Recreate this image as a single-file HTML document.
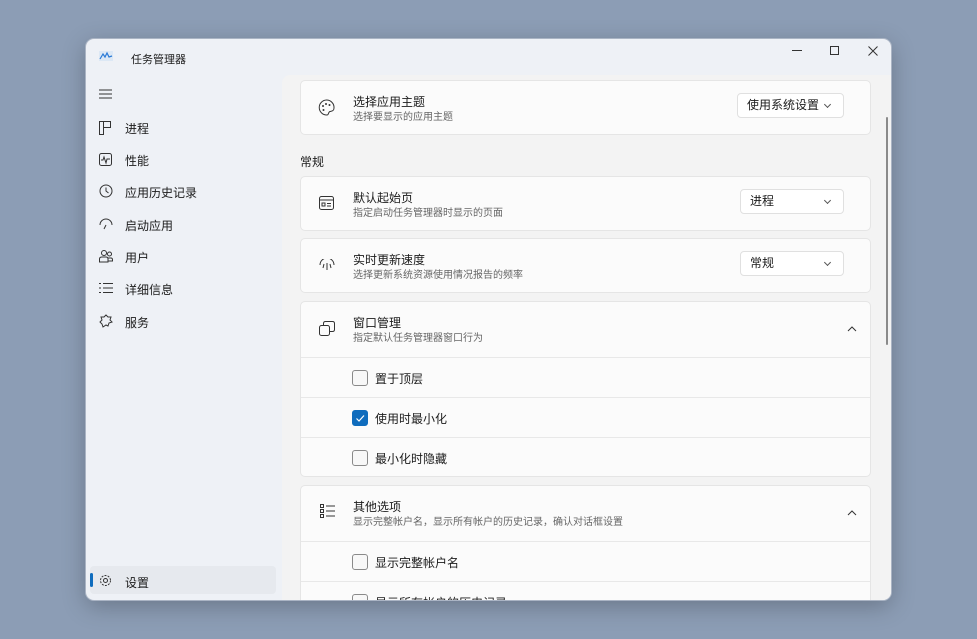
<!DOCTYPE html>
<html><head><meta charset="utf-8"><style>
*{box-sizing:border-box;margin:0;padding:0}
body{width:977px;height:639px;background:#8c9db5;font-family:"Liberation Sans","Noto Sans CJK SC",sans-serif;position:relative;overflow:hidden;color:#1b1b1b}
.win{position:absolute;left:86px;top:39px;width:805px;height:561px;background:#eef1f6;border-radius:8px;overflow:hidden;box-shadow:0 0 0 1px #aab4c4,0 6px 24px rgba(0,0,0,.25)}
.content{position:absolute;left:196px;top:36px;right:0;bottom:0;background:#f3f3f3;border-top-left-radius:8px}
.t{position:absolute;font-size:12px;white-space:nowrap}
.nav{position:absolute;left:13px;font-size:12px}
.nav span{position:absolute;left:26px;top:0;white-space:nowrap}
.card{position:absolute;left:214px;width:571px;background:#fbfbfb;border:1px solid #e5e5e5;border-radius:5px}
.card .h{position:absolute;left:52px;font-size:12px;color:#1b1b1b}
.card .s{position:absolute;left:52px;font-size:10px;color:#666}
.dd{position:absolute;background:#fff;border:1px solid #e0e0e0;border-radius:4px;height:25px;font-size:12px;line-height:23px;padding-left:9px}
.dd:after{content:"";position:absolute;right:13px;top:8px;width:4px;height:4px;border-right:1px solid #555;border-bottom:1px solid #555;transform:rotate(45deg)}
.row{position:absolute;left:0;right:0;border-top:1px solid #e8e8e8;height:40px}
.cb{position:absolute;left:51px;top:12px;width:16px;height:16px;border:1px solid #8a8a8a;border-radius:3px;background:#f8f8f8}
.row span{position:absolute;left:74px;top:12px;font-size:12px}
svg{position:absolute}
</style></head><body>
<div class="win">
<svg style="left:13px;top:12px" width="14" height="10" viewBox="0 0 14 10"><rect x="0" y="0" width="14" height="10" fill="#dce8f5"/><path d="M1 8 L4 3 L6 6 L8 2 L10 6 L13 5" stroke="#2a7ad6" fill="none" stroke-width="1.2"/></svg>
<div class="t" style="left:45px;top:12px;font-size:11px">任务管理器</div>
<svg style="left:706px;top:11px" width="10" height="2"><path d="M0 .5H10" stroke="#333"/></svg>
<div style="position:absolute;left:744px;top:7px;width:9px;height:9px;border:1px solid #333"></div>
<svg style="left:782px;top:7px" width="10" height="10"><path d="M.5 .5L9.5 9.5M9.5 .5L.5 9.5" stroke="#333"/></svg>
<div class="content"></div>
<svg style="left:13px;top:50px" width="13" height="10"><path d="M0 1H13M0 5H13M0 9H13" stroke="#333" stroke-width="1"/></svg>
<div class="nav" style="top:81px"><svg width="12" height="14" style="left:0;top:1px"><path d="M.5 .5H11.5V6.5H4.5V13.5H.5ZM4.5 .5V6.5" stroke="#333" fill="none"/></svg><span>进程</span></div>
<div class="nav" style="top:113px"><svg width="13" height="13" style="left:0;top:1px"><rect x=".5" y=".5" width="12" height="12" rx="2" stroke="#333" fill="none"/><path d="M2 7H4L5 4L7 10L8 6H11" stroke="#333" fill="none"/></svg><span>性能</span></div>
<div class="nav" style="top:145px"><svg width="14" height="14" style="left:0;top:0"><circle cx="7" cy="7" r="6" stroke="#333" fill="none"/><path d="M7 3.5V7L9.5 9" stroke="#333" fill="none"/></svg><span>应用历史记录</span></div>
<div class="nav" style="top:178px"><svg width="14" height="12" style="left:0;top:1px"><path d="M1 7A6 6 0 0 1 13 7M7 7L5 11" stroke="#333" fill="none"/></svg><span>启动应用</span></div>
<div class="nav" style="top:210px"><svg width="14" height="14" style="left:0;top:0"><circle cx="5" cy="4" r="2.5" stroke="#333" fill="none"/><circle cx="10.5" cy="5" r="2" stroke="#333" fill="none"/><path d="M.5 13V10Q.5 8 3 8H7Q9 8 9 10V13ZM9 9H12Q13.5 9 13.5 11V12H9" stroke="#333" fill="none"/></svg><span>用户</span></div>
<div class="nav" style="top:242px"><svg width="14" height="12" style="left:0;top:1px"><path d="M0 1.5H2M4 1.5H14M0 6H2M4 6H14M0 10.5H2M4 10.5H14" stroke="#333"/></svg><span>详细信息</span></div>
<div class="nav" style="top:275px"><svg width="14" height="14" style="left:0;top:0"><path d="M7 1L9 3L12 3L11 6L13 8L10 9L9 12L7 11L4 13L3 10L1 8L3 6L2 3L5 3Z" stroke="#333" fill="none"/></svg><span>服务</span></div>
<div style="position:absolute;left:4px;top:527px;width:186px;height:28px;background:#e6e9ee;border-radius:4px"></div>
<div style="position:absolute;left:4px;top:534px;width:3px;height:14px;background:#0f6cbd;border-radius:2px"></div>
<div class="nav" style="top:535px"><svg width="13" height="13" style="left:0;top:0"><circle cx="6.5" cy="6.5" r="2" stroke="#333" fill="none"/><circle cx="6.5" cy="6.5" r="5" stroke="#333" fill="none" stroke-dasharray="2 1.2"/></svg><span>设置</span></div>

<div class="card" style="top:41px;height:55px">
<svg style="left:17px;top:18px" width="17" height="17"><path d="M8.5 1A7.5 7.5 0 1 0 9 16C11 16 10 13 12 12.5C14 12 16 12 16 9A7.5 7.5 0 0 0 8.5 1Z" stroke="#333" fill="none"/><circle cx="5" cy="7" r="1" fill="#333"/><circle cx="8" cy="5" r="1" fill="#333"/><circle cx="11.5" cy="6" r="1" fill="#333"/><circle cx="5.5" cy="11" r="1" fill="#333"/></svg>
<div class="h" style="top:12px">选择应用主题</div><div class="s" style="top:27px">选择要显示的应用主题</div>
<div class="dd" style="left:436px;top:12px;width:107px">使用系统设置</div></div>
<div class="t" style="left:214px;top:114px">常规</div>
<div class="card" style="top:137px;height:55px">
<svg style="left:18px;top:19px" width="15" height="14"><rect x=".5" y=".5" width="14" height="13" rx="2" stroke="#333" fill="none"/><path d="M1 4H14M3 7H6V10H3ZM8 7.5H12M8 10H12" stroke="#333" fill="none"/></svg>
<div class="h" style="top:12px">默认起始页</div><div class="s" style="top:27px">指定启动任务管理器时显示的页面</div>
<div class="dd" style="left:439px;top:12px;width:104px">进程</div></div>
<div class="card" style="top:199px;height:55px">
<svg style="left:18px;top:20px" width="16" height="12"><path d="M1 6A7 7 0 0 1 15 6M8 4V11M5 5L4 9M11 5L12 9" stroke="#333" fill="none"/></svg>
<div class="h" style="top:12px">实时更新速度</div><div class="s" style="top:27px">选择更新系统资源使用情况报告的频率</div>
<div class="dd" style="left:439px;top:12px;width:104px">常规</div></div>
<div class="card" style="top:262px;height:176px">
<svg style="left:18px;top:19px" width="16" height="15"><rect x=".5" y="4.5" width="10" height="10" rx="2" stroke="#333" fill="#fbfbfb"/><path d="M4.5 4V2.5Q4.5.5 6.5.5H13.5Q15.5.5 15.5 2.5V8.5Q15.5 10.5 13.5 10.5H11" stroke="#333" fill="none"/></svg>
<div class="h" style="top:12px">窗口管理</div><div class="s" style="top:27px">指定默认任务管理器窗口行为</div>
<svg style="left:546px;top:24px" width="10" height="6"><path d="M1 5L5 1L9 5" stroke="#333" fill="none"/></svg>
<div class="row" style="top:55px"><div class="cb"></div><span>置于顶层</span></div>
<div class="row" style="top:95px"><div class="cb" style="background:#0f6cbd;border-color:#0f6cbd"><svg width="14" height="14" style="left:0;top:0"><path d="M3.5 7.5L6 10L11 4.5" stroke="#fff" fill="none" stroke-width="1.2"/></svg></div><span>使用时最小化</span></div>
<div class="row" style="top:135px"><div class="cb"></div><span>最小化时隐藏</span></div>
</div>
<div class="card" style="top:446px;height:140px">
<svg style="left:19px;top:18px" width="15" height="15"><rect x=".5" y=".5" width="3" height="3" stroke="#333" fill="none"/><rect x=".5" y="5.5" width="3" height="3" stroke="#333" fill="none"/><rect x=".5" y="10.5" width="3" height="3" stroke="#333" fill="none"/><path d="M6 2H15M6 7H15M6 12H15" stroke="#333"/></svg>
<div class="h" style="top:12px">其他选项</div><div class="s" style="top:27px">显示完整帐户名，显示所有帐户的历史记录，确认对话框设置</div>
<svg style="left:546px;top:24px" width="10" height="6"><path d="M1 5L5 1L9 5" stroke="#333" fill="none"/></svg>
<div class="row" style="top:55px"><div class="cb"></div><span>显示完整帐户名</span></div>
<div class="row" style="top:95px"><div class="cb"></div><span>显示所有帐户的历史记录</span></div>
</div>
<div style="position:absolute;left:800px;top:78px;width:2px;height:228px;background:#8a8a8a;border-radius:1px"></div>
</div>
</body></html>
